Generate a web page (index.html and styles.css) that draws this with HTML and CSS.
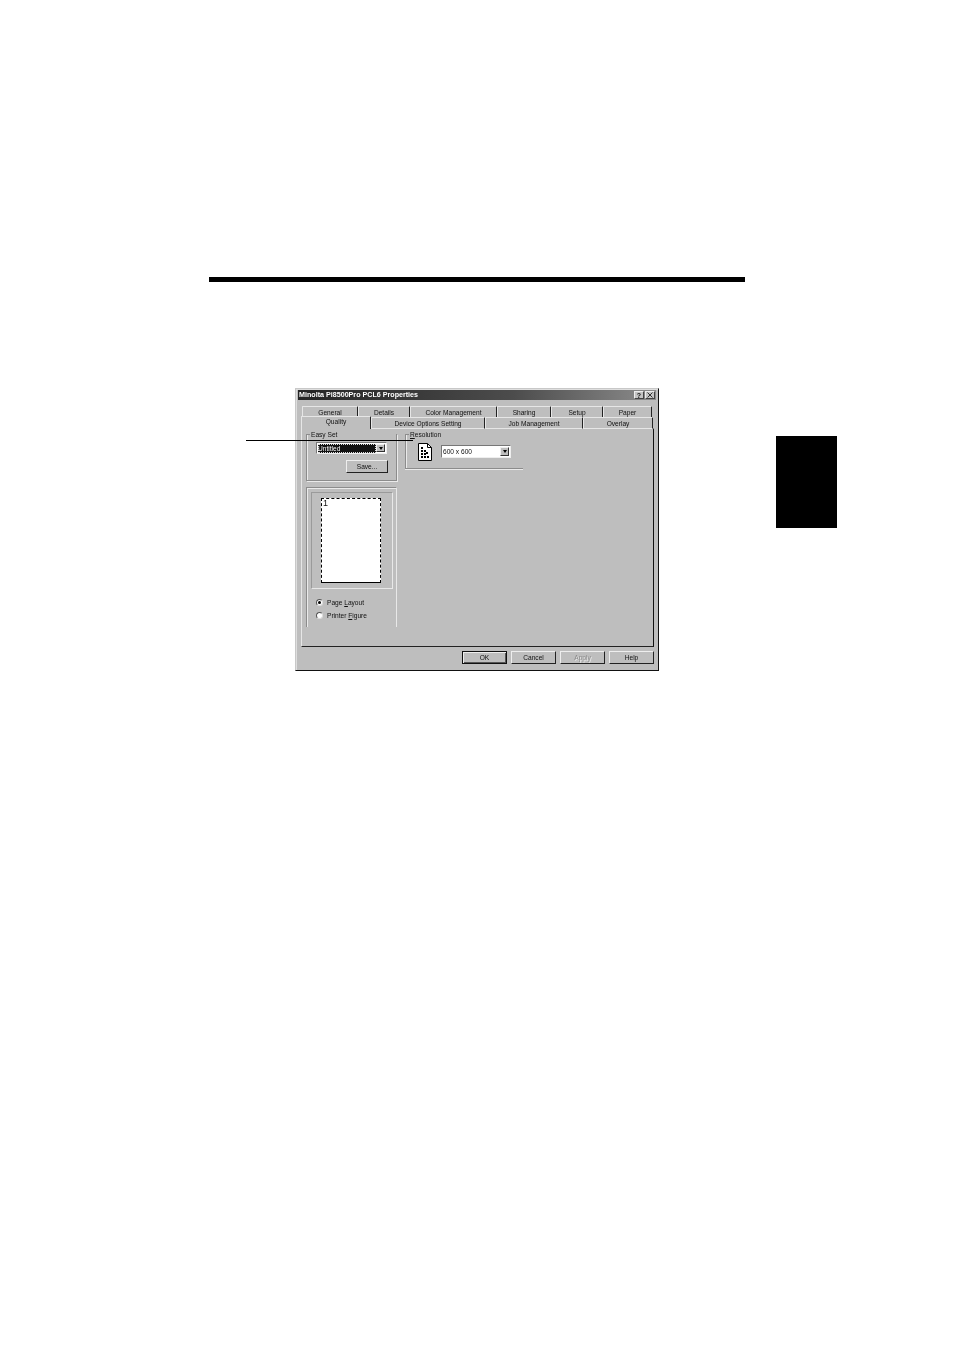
FILE: index.html
```html
<!DOCTYPE html>
<html lang="en">
<head>
<meta charset="utf-8">
<title>Minolta Pi8500Pro PCL6 Properties</title>
<link rel="stylesheet" href="styles.css">
</head>
<body>
<div class="page">
  <div class="rule"></div>
  <div class="side-tab"></div>
  <div class="callout"></div>
  <section class="dialog">
    <header class="titlebar">
      <span class="title">Minolta Pi8500Pro PCL6 Properties</span>
      <span class="winbtn winbtn-help">?</span>
      <span class="winbtn winbtn-close">
        <svg width="6" height="6" viewBox="0 0 6 6"><path d="M0.5 0.5L5.5 5.5M5.5 0.5L0.5 5.5" stroke="#222" stroke-width="0.9" fill="none"/></svg>
      </span>
    </header>
    <div class="tabs tabs-back">
      <span class="tab t-general">General</span>
      <span class="tab t-details">Details</span>
      <span class="tab t-color">Color Management</span>
      <span class="tab t-sharing">Sharing</span>
      <span class="tab t-setup">Setup</span>
      <span class="tab t-paper">Paper</span>
    </div>
    <div class="tabs tabs-front">
      <span class="tab t-quality">Quality</span>
      <span class="tab t-device">Device Options Setting</span>
      <span class="tab t-job">Job Management</span>
      <span class="tab t-overlay">Overlay</span>
    </div>
    <div class="panel">
      <div class="col-left">
        <div class="group easy">
          <div class="group-head"><span class="tick"></span><span class="legend">Easy Set</span></div>
          <div class="easy-body">
            <div class="combo combo-easy">
              <span class="combo-value selected">Untitled</span>
              <span class="combo-arrow"></span>
            </div>
            <div class="save-row"><span class="btn btn-save">Save...</span></div>
          </div>
        </div>
        <div class="preview">
          <div class="preview-box">
            <div class="sheet">1</div>
          </div>
          <div class="radios">
            <div class="radio-row"><span class="radio checked"></span><span>Page <u>L</u>ayout</span></div>
            <div class="radio-row"><span class="radio"></span><span>Printer <u>F</u>igure</span></div>
          </div>
        </div>
      </div>
      <div class="group resolution">
        <div class="group-head"><span class="tick"></span><span class="legend"><u>R</u>esolution</span></div>
        <div class="res-row">
          <svg class="res-icon" width="14" height="18" viewBox="0 0 14 18">
            <path d="M0.5 0.5H9.5L13.5 4.5V17.5H0.5Z" fill="#fff" stroke="#000"/>
            <path d="M9.5 0.5V4.5H13.5" fill="none" stroke="#000"/>
            <path d="M3 4h2v2H3zM3 7h2v2H3zM6 7h2v2H6zM3 10h2v2H3zM6 10h2v2H6zM8 9h2v2H8zM3 13h2v2H3zM6 13h2v2H6zM9 13h2v2H9z" fill="#000"/>
          </svg>
          <div class="combo combo-res">
            <span class="combo-value">600 x 600</span>
            <span class="combo-arrow"></span>
          </div>
        </div>
      </div>
    </div>
    <div class="actions">
      <span class="btn btn-default">OK</span>
      <span class="btn">Cancel</span>
      <span class="btn btn-disabled">Apply</span>
      <span class="btn">Help</span>
    </div>
  </section>
</div>
</body>
</html>
```
FILE: styles.css
```css
* { box-sizing: border-box; }
html, body { margin: 0; padding: 0; background: #fff; }
.page { position: relative; width: 954px; height: 1351px; padding-top: 277px; overflow: hidden; }
.rule { width: 536px; height: 5px; margin-left: 209px; background: #000; }
.side-tab { position: absolute; left: 776px; top: 436px; width: 61px; height: 92px; background: #000; }
.callout { position: absolute; left: 246px; top: 440px; width: 167px; height: 1px; background: #000; z-index: 5; }

.dialog {
  width: 364px; height: 283px; margin: 106px 0 0 295px; padding: 1px 2px 0;
  background: #bebebe; color: #111;
  border: 1px solid #c8c8c8; border-right: 1px solid #111; border-bottom: 1px solid #111;
  box-shadow: inset 1px 1px 0 #dedede;
  font: 6.6px/9px "Liberation Sans", Arial, sans-serif;
  filter: blur(0.3px);
}
.titlebar {
  display: flex; align-items: center; height: 10px; padding: 0 1px 0 1px;
  background: linear-gradient(90deg, #242424 0%, #4c4c4c 60%, #8c8c8c 100%);
  color: #fff; font-weight: bold; font-size: 7.15px;
}
.title { flex: 1; white-space: nowrap; }
.winbtn {
  display: flex; align-items: center; justify-content: center; width: 10px; height: 8px;
  background: #c4c4c4; color: #111; font-weight: bold; font-size: 7px;
  border: 1px solid; border-color: #eee #444 #444 #eee;
}
.winbtn-close { margin-left: 1px; }

.tabs { display: flex; white-space: nowrap; text-align: center; }
.tab {
  display: block; border-top: 1px solid #e6e6e6; border-left: 1px solid #e6e6e6;
  border-right: 1px solid #222; border-radius: 1px 1px 0 0;
}
.tabs-back { height: 11px; margin: 6px 0 0 4px; }
.tabs-back .tab { height: 11px; line-height: 11px; }
.tabs-front { height: 11px; margin: 0 0 0 3px; }
.tabs-front .tab { height: 12px; line-height: 11px; border-bottom: 1px solid #e6e6e6; }
.t-general { width: 56px; } .t-details { width: 52px; } .t-color { width: 87px; }
.t-sharing { width: 54px; } .t-setup { width: 52px; } .t-paper { width: 49px; }
.tabs-front .t-quality { width: 70px; height: 13px; margin-top: -1px; line-height: 10px; border-bottom: 0; background: #bebebe; position: relative; z-index: 1; }
.t-device { width: 114px; } .t-job { width: 98px; } .t-overlay { width: 70px; }

.panel {
  display: flex; gap: 8px; width: 353px; height: 219px; margin-left: 3px; padding: 5px 0 0 4px;
  border-left: 1px solid #e6e6e6; border-right: 1px solid #111; border-bottom: 1px solid #222;
  border-top: 1px solid #e6e6e6;
}
.col-left { display: flex; flex-direction: column; gap: 6px; width: 91px; }
.group {
  border: 1px solid #8c8c8c; border-top: 0;
  box-shadow: inset 1px 0 0 #eaeaea, 1px 1px 0 #eaeaea;
}
.group-head { display: flex; align-items: center; height: 7px; margin-top: -3px; }
.tick { width: 3px; height: 1px; background: #8c8c8c; }
.legend { padding-left: 1px; line-height: 7px; }
.easy { height: 47px; }
.easy-body { padding: 4px 8px 0 9px; }
.combo {
  display: flex; align-items: center; background: #fff; height: 12px; padding: 1px;
  border: 1px solid; border-color: #777 #eee #eee #777;
}
.combo-easy { width: 71px; }
.combo-value { flex: 1; padding-left: 0; line-height: 9px; height: 9px; }
.combo-value.selected { background: #111; color: #fff; outline: 1px dotted #ddd; outline-offset: -1px; }
.combo-arrow {
  display: flex; align-items: center; justify-content: center; width: 9px; height: 100%;
  background: #bebebe; border: 1px solid; border-color: #eee #333 #333 #eee;
}
.combo-arrow::after { content: ""; border: 2px solid transparent; border-top: 3px solid #000; border-bottom: 0; }
.save-row { display: flex; justify-content: flex-end; margin-top: 6px; }
.btn {
  display: flex; align-items: center; justify-content: center; width: 45px; height: 13px;
  background: #bebebe; border: 1px solid; border-color: #eee #222 #222 #eee;
}
.btn-save { width: 42px; }
.preview {
  height: 140px; padding: 4px;
  border: 1px solid; border-color: #8c8c8c #e8e8e8 transparent #8c8c8c; border-bottom: 0;
  box-shadow: inset 1px 1px 0 #eaeaea;
}
.preview-box {
  display: flex; justify-content: flex-start; padding: 5px 0 0 9px; width: 82px; height: 97px;
  border: 1px solid; border-color: #9a9a9a #e8e8e8 #e8e8e8 #9a9a9a;
}
.sheet {
  width: 60px; height: 85px; background: #fff;
  border: 1.5px dashed #000; border-bottom-style: solid;
  padding: 0 0 0 1px; font-size: 9px; line-height: 9px;
}
.radios { display: flex; flex-direction: column; gap: 4px; margin: 9px 0 0 5px; }
.radio-row { display: flex; align-items: center; gap: 4px; height: 9px; }
.radio {
  width: 7px; height: 7px; border-radius: 50%; background: #fff;
  border: 1px solid; border-color: #555 #ddd #ddd #555;
  display: flex; align-items: center; justify-content: center;
}
.radio.checked::after { content: ""; width: 3px; height: 3px; border-radius: 50%; background: #000; }
.group.resolution { width: 118px; height: 35px; border-right: 0; box-shadow: inset 1px 0 0 #eaeaea, 0 1px 0 #eaeaea; }
.res-row { display: flex; align-items: flex-start; gap: 9px; margin: 5px 0 0 12px; }
.combo-res { width: 70px; height: 13px; margin-top: 2px; }
.actions { display: flex; justify-content: flex-end; gap: 4px; margin-top: 4px; padding-right: 2px; }
.btn-default { border: 1px solid #111; box-shadow: inset 1px 1px 0 #eee, inset -1px -1px 0 #555; }
.btn-disabled { color: #8a8a8a; text-shadow: 1px 1px 0 #eee; }
```
